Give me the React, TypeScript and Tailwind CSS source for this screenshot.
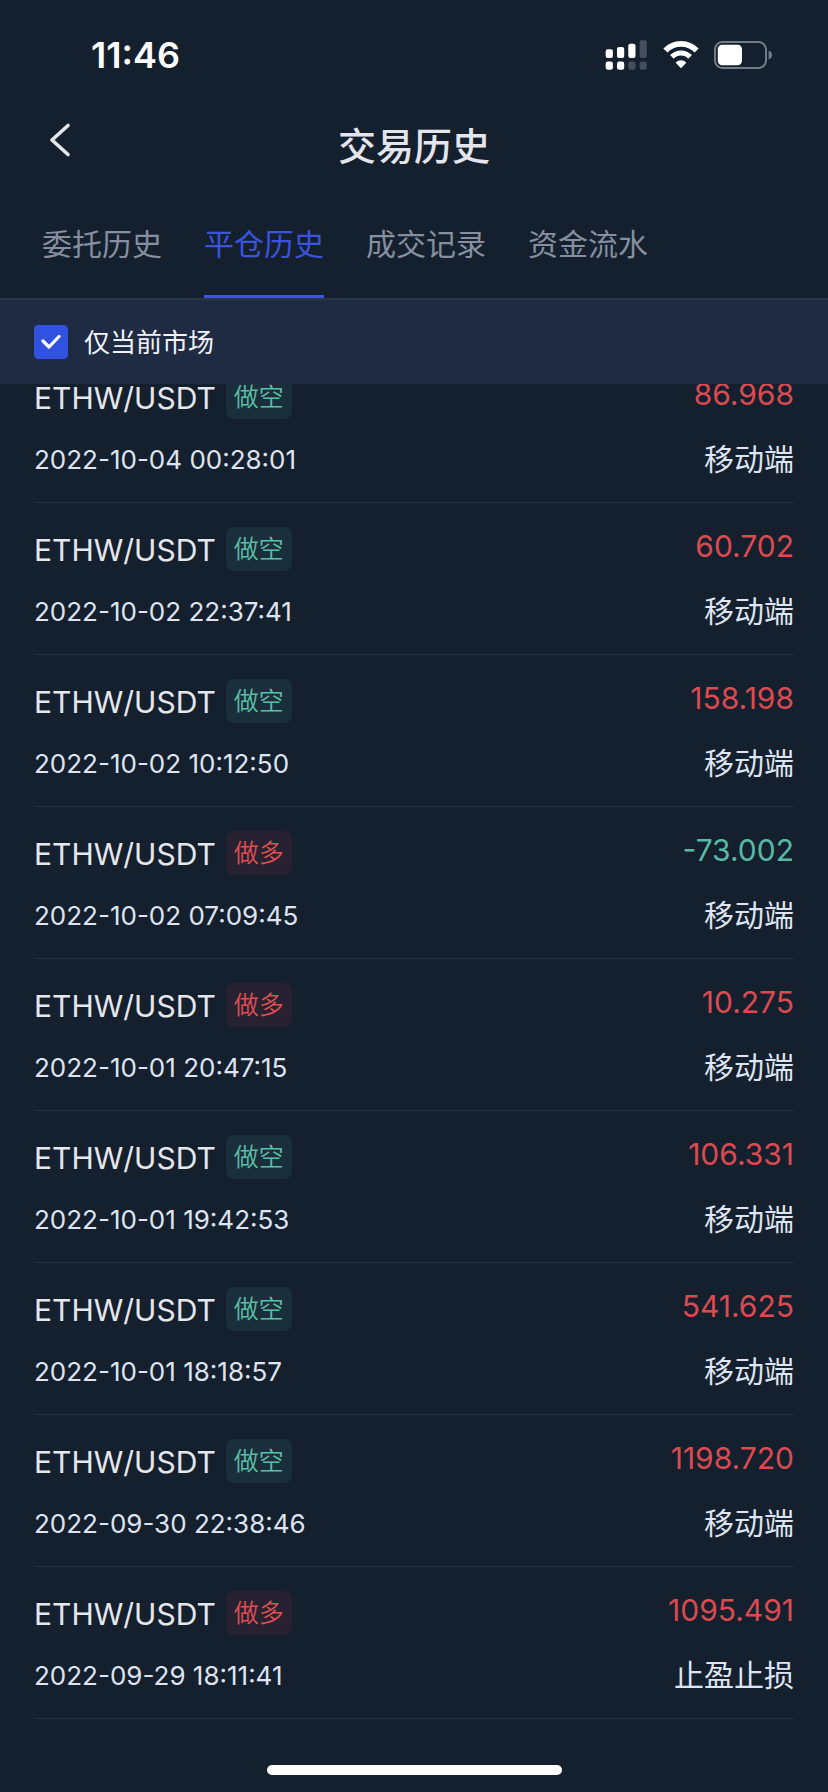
import { useState } from "react";
import clsx from "clsx";

type Side = "short" | "long";

interface Trade {
  pair: string;
  side: Side;
  time: string;
  profit: string;
  source: string;
}

const TABS = ["委托历史", "平仓历史", "成交记录", "资金流水"];

const TRADES: Trade[] = [
  { pair: "ETHW/USDT", side: "short", time: "2022-10-04 00:28:01", profit: "86.968", source: "移动端" },
  { pair: "ETHW/USDT", side: "short", time: "2022-10-02 22:37:41", profit: "60.702", source: "移动端" },
  { pair: "ETHW/USDT", side: "short", time: "2022-10-02 10:12:50", profit: "158.198", source: "移动端" },
  { pair: "ETHW/USDT", side: "long", time: "2022-10-02 07:09:45", profit: "-73.002", source: "移动端" },
  { pair: "ETHW/USDT", side: "long", time: "2022-10-01 20:47:15", profit: "10.275", source: "移动端" },
  { pair: "ETHW/USDT", side: "short", time: "2022-10-01 19:42:53", profit: "106.331", source: "移动端" },
  { pair: "ETHW/USDT", side: "short", time: "2022-10-01 18:18:57", profit: "541.625", source: "移动端" },
  { pair: "ETHW/USDT", side: "short", time: "2022-09-30 22:38:46", profit: "1198.720", source: "移动端" },
  { pair: "ETHW/USDT", side: "long", time: "2022-09-29 18:11:41", profit: "1095.491", source: "止盈止损" },
];

function SignalIcon() {
  return (
    <svg width="43" height="30" viewBox="0 0 43 30" fill="#fff" aria-hidden="true">
      <rect x="0.7" y="9.3" width="7.2" height="8.8" rx="2" />
      <rect x="12" y="7" width="7.2" height="11.1" rx="2" />
      <rect x="23.3" y="3.7" width="7.2" height="14.4" rx="2" />
      <rect x="34.6" y="0.2" width="7.2" height="17.9" rx="2" fill="#444e5d" />
      <rect x="0.7" y="21.6" width="7.2" height="8.2" rx="2.2" />
      <rect x="12" y="21.6" width="7.2" height="8.2" rx="2.2" />
      <rect x="23.3" y="21.6" width="7.2" height="8.2" rx="2.2" fill="#444e5d" />
      <rect x="34.6" y="21.6" width="7.2" height="8.2" rx="2.2" fill="#444e5d" />
    </svg>
  );
}

function WifiIcon() {
  return (
    <svg width="36" height="28" viewBox="0 0 36 28" fill="none" stroke="#fff" aria-hidden="true">
      <path d="M2.4 9.5A21.6 21.6 0 0 1 33.6 9.5" strokeWidth="5.6" />
      <path d="M8.9 15.9A12.6 12.6 0 0 1 27.1 15.9" strokeWidth="5.2" />
      <path
        d="M18 26.4L13.4 21.7A6.6 6.6 0 0 1 22.6 21.7Z"
        fill="#fff"
        strokeWidth="1.2"
        strokeLinejoin="round"
      />
    </svg>
  );
}

function BatteryIcon() {
  return (
    <svg width="58" height="28" viewBox="0 0 58 28" fill="none" aria-hidden="true">
      <rect x="1" y="1" width="51" height="26" rx="7.5" stroke="#737b87" strokeWidth="2" />
      <rect x="3.8" y="3.8" width="24.2" height="20.4" rx="4.5" fill="#fff" />
      <path d="M54.6 9.6C56.8 10.4 58 12 58 14C58 16 56.8 17.6 54.6 18.4Z" fill="#737b87" />
    </svg>
  );
}

function StatusBar() {
  return (
    <div className="flex h-[110px] items-center justify-between pr-14 pl-[91px]">
      <span className="text-[36px] leading-10 font-semibold text-white">11:46</span>
      <div className="flex items-center gap-[15px]">
        <SignalIcon />
        <WifiIcon />
        <BatteryIcon />
      </div>
    </div>
  );
}

function TradeRow({ trade }: { trade: Trade }) {
  const isLoss = trade.profit.startsWith("-");

  return (
    <li className="flex justify-between border-b border-[#263243] pt-6 pb-6">
      <div>
        <div className="flex h-11 items-center gap-[10px]">
          <span className="pt-[2px] text-[30px] leading-9 text-[#e6e7eb]">{trade.pair}</span>
          <span
            className={clsx(
              "rounded-lg px-2 text-[25px] leading-[44px] font-[350]",
              trade.side === "short" ? "bg-[#1a2f3b] text-[#5abfa6]" : "bg-[#282131] text-[#e04f50]"
            )}
          >
            {trade.side === "short" ? "做空" : "做多"}
          </span>
        </div>
        <time className="mt-[23px] block text-[26px] leading-9 text-[#dfe4f0]">{trade.time}</time>
      </div>
      <div className="text-right text-[30px]">
        <p className={clsx("leading-[38px]", isLoss ? "text-[#58b9a6]" : "text-[#dc4a50]")}>{trade.profit}</p>
        <p className="mt-7 leading-9 text-[#dfe4f0]">{trade.source}</p>
      </div>
    </li>
  );
}

export default function App() {
  const [activeTab, setActiveTab] = useState(1);
  const [currentOnly, setCurrentOnly] = useState(true);

  return (
    <div className="flex min-h-screen flex-col bg-[#15202f] font-['Inter','Noto_Sans_CJK_SC',sans-serif]">
      <StatusBar />

      <header className="grid h-[72px] grid-cols-[1fr_auto_1fr] items-center">
        <button type="button" aria-label="返回" className="ml-10 flex h-[60px] w-10 items-center justify-center self-start">
          <svg width="22" height="34" viewBox="0 0 22 34" fill="none" aria-hidden="true">
            <path
              d="M19 2.5L3 17L19 31.5"
              stroke="#e4e7ee"
              strokeWidth="3.6"
              strokeLinecap="round"
              strokeLinejoin="round"
            />
          </svg>
        </button>
        <h1 className="text-[38px] leading-[48px] font-medium text-[#e4e5ea]">交易历史</h1>
      </header>

      {/* Tabs */}
      <nav className="flex h-[116px] gap-[42px] px-[42px]">
        {TABS.map((tab, i) => (
          <button
            key={tab}
            type="button"
            onClick={() => setActiveTab(i)}
            className={clsx(
              "border-b-[3px] pt-[10px] text-[30px] leading-10",
              i === activeTab ? "border-[#3a54de] text-[#3a54de]" : "border-transparent text-[#868f9f]"
            )}
          >
            {tab}
          </button>
        ))}
      </nav>

      {/* Market filter */}
      <div className="flex h-[86px] items-center border-t-2 border-[#2a364a] bg-[#1f2b42] px-[34px]">
        <label className="flex items-center gap-4 text-[26px] leading-9 text-[#f1f3f8]">
          <span className="grid size-[34px] place-items-center">
            <input
              type="checkbox"
              checked={currentOnly}
              onChange={(e) => setCurrentOnly(e.target.checked)}
              className="col-start-1 row-start-1 size-[34px] appearance-none rounded border border-[#3152e0] checked:bg-[#3152e0]"
            />
            {currentOnly && (
              <svg
                className="pointer-events-none col-start-1 row-start-1"
                width="20"
                height="16"
                viewBox="0 0 20 16"
                fill="none"
                aria-hidden="true"
              >
                <path
                  d="M2 7L8 13L18 2.5"
                  stroke="#fff"
                  strokeWidth="3.2"
                  strokeLinecap="round"
                  strokeLinejoin="round"
                />
              </svg>
            )}
          </span>
          <span className="pt-[2px]">仅当前市场</span>
        </label>
      </div>

      {/* History list, scrolled slightly under the filter */}
      <main className="overflow-hidden px-[34px]">
        <ul className="-mt-[33px]">
          {TRADES.map((trade) => (
            <TradeRow key={trade.time} trade={trade} />
          ))}
        </ul>
      </main>

      <div className="mx-auto mt-auto mb-[17px] h-[10px] w-[295px] rounded-full bg-white" />
    </div>
  );
}
